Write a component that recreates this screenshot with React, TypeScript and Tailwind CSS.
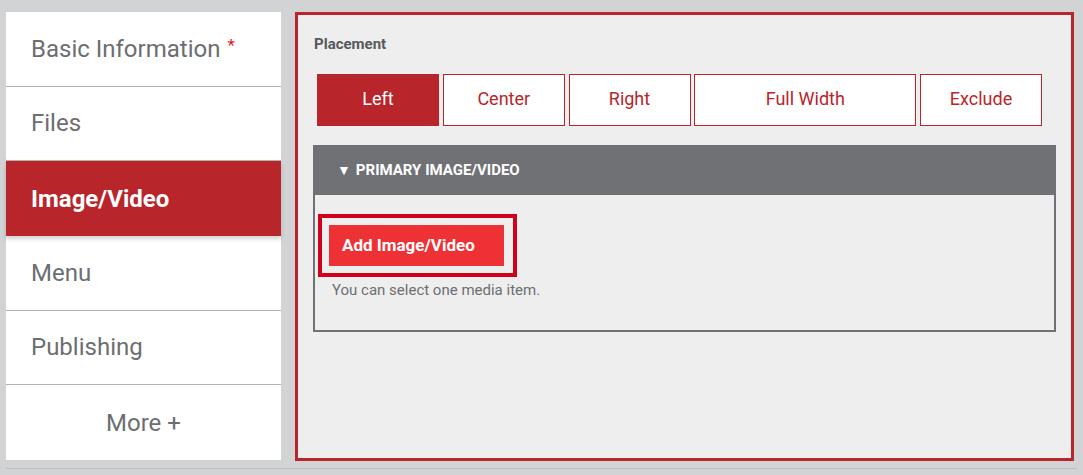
import React, { useState } from 'react';

const navItems = ['Basic Information', 'Files', 'Image/Video', 'Menu', 'Publishing'];
const placements = [
  { label: 'Left', w: 'w-[122px]' },
  { label: 'Center', w: 'w-[122px]' },
  { label: 'Right', w: 'w-[122px]' },
  { label: 'Full Width', w: 'w-[222px]' },
  { label: 'Exclude', w: 'w-[122px]' },
];

const App: React.FC = () => {
  const [active, setActive] = useState('Image/Video');
  const [placement, setPlacement] = useState('Left');

  return (
    <div className="w-[1083px] h-[475px] bg-[#d2d3d5] font-['Roboto',sans-serif] relative overflow-hidden">
      <div className="flex pt-[12px] pl-[6px] pr-[9px]">
        {/* Sidebar */}
        <nav className="w-[275px] h-[448px] bg-white flex flex-col shrink-0">
          {navItems.map((item) => {
            const isActive = item === active;
            return (
              <button
                key={item}
                onClick={() => setActive(item)}
                className={
                  isActive
                    ? 'h-[74.67px] flex items-center pl-[25px] text-[24px] font-bold text-white bg-[#b8252b] shadow-[0_3px_4px_rgba(0,0,0,0.18)] relative z-10'
                    : 'h-[74.67px] flex items-center pl-[25px] text-[24px] text-[#6d6e71] border-b border-[#b5b3ae]'
                }
              >
                {item}
                {item === 'Basic Information' && (
                  <span className="text-[#e31b23] text-[17px] ml-[7px] -mt-[6px]">*</span>
                )}
              </button>
            );
          })}
          <button className="h-[74.67px] flex items-center justify-center text-[24px] text-[#6d6e71]">
            More +
          </button>
        </nav>

        {/* Main panel */}
        <main className="ml-[14px] w-[779px] h-[449px] border-[3px] border-[#b8252b] bg-[#eeeeee] px-[15px] pt-[19px]">
          <div className="text-[15px] font-bold text-[#58595b] pl-[1px] leading-[20px]">Placement</div>
          <div className="flex gap-[3.75px] ml-[4px] mt-[20px]">
            {placements.map((p) => {
              const on = p.label === placement;
              return (
                <button
                  key={p.label}
                  onClick={() => setPlacement(p.label)}
                  className={`${p.w} h-[52px] text-[18px] border pb-[3px] ${
                    on
                      ? 'bg-[#b8252b] border-[#b8252b] text-white'
                      : 'bg-white border-[#b8252b] text-[#b8252b]'
                  }`}
                >
                  {p.label}
                </button>
              );
            })}
          </div>

          <section className="mt-[19px]">
            <div className="h-[50px] bg-[#707175] flex items-center pl-[24px] text-white text-[15px] font-bold">
              <span className="text-[14px] mr-[5px]">▼</span>
              PRIMARY IMAGE/VIDEO
            </div>
            <div className="h-[137px] border-2 border-t-0 border-[#707175] pt-[19px] pl-[3px]">
              <div className="inline-block border-4 border-[#d0021b] p-[7px] pr-[9px]">
                <button className="w-[175px] h-[41px] bg-[#ee3135] text-white text-[17px] font-bold text-left pl-[13px]">
                  Add Image/Video
                </button>
              </div>
              <div className="text-[15px] text-[#6d6e71] pl-[14px] leading-[20px] mt-[3px]">
                You can select one media item.
              </div>
            </div>
          </section>
        </main>
      </div>
      <div className="mx-[6px] mt-[7px] h-px bg-[#bfc0bb] w-[1071px]" />
    </div>
  );
};

export default App;
